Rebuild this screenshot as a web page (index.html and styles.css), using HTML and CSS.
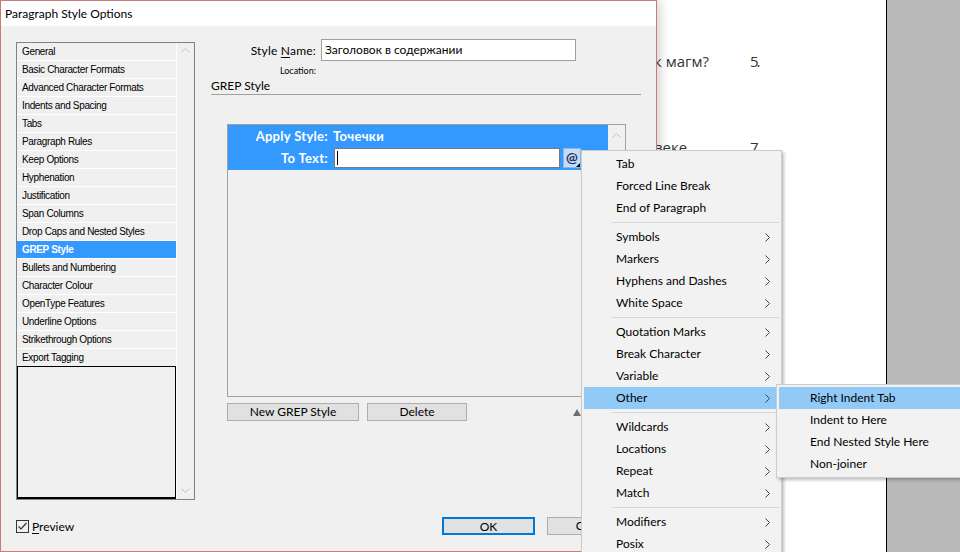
FILE: index.html
```html
<!DOCTYPE html>
<html>
<head>
<meta charset="utf-8">
<title>Paragraph Style Options</title>
<link rel="stylesheet" href="styles.css">
</head>
<body>
<div class="screen">
  <div class="dialog">
    <div class="titlebar">Paragraph Style Options</div>
    <div class="dlg-body">
      <div class="main">
        <div class="catlist">
          <div class="items">
            <div class="item">General</div>
            <div class="item">Basic Character Formats</div>
            <div class="item">Advanced Character Formats</div>
            <div class="item">Indents and Spacing</div>
            <div class="item">Tabs</div>
            <div class="item">Paragraph Rules</div>
            <div class="item">Keep Options</div>
            <div class="item">Hyphenation</div>
            <div class="item">Justification</div>
            <div class="item">Span Columns</div>
            <div class="item">Drop Caps and Nested Styles</div>
            <div class="item sel">GREP Style</div>
            <div class="item">Bullets and Numbering</div>
            <div class="item">Character Colour</div>
            <div class="item">OpenType Features</div>
            <div class="item">Underline Options</div>
            <div class="item">Strikethrough Options</div>
            <div class="item">Export Tagging</div>
            <div class="blackbox"></div>
          </div>
          <div class="vscroll">
            <svg class="chev" width="9" height="5" viewBox="0 0 9 5"><path d="M0.5 4.5 L4.5 0.5 L8.5 4.5" fill="none" stroke="#c2c2c2"/></svg>
            <svg class="chev" width="9" height="5" viewBox="0 0 9 5"><path d="M0.5 0.5 L4.5 4.5 L8.5 0.5" fill="none" stroke="#c2c2c2"/></svg>
          </div>
        </div>
        <div class="panel">
          <div class="namerow">
            <span class="lbl">Style <u>N</u>ame:</span>
            <div class="input">Заголовок в содержании</div>
          </div>
          <div class="locrow">Location:</div>
          <div class="sechead">GREP Style</div>
          <div class="grepbox">
            <div class="grepitems">
              <div class="greprow">
                <div class="gr-line1"><span class="gr-label">Apply Style:</span><span>Точечки</span></div>
                <div class="gr-line2">
                  <span class="gr-label">To Text:</span>
                  <div class="gr-input"><span class="caret"></span></div>
                  <div class="atbtn">@<span class="attri"></span></div>
                </div>
              </div>
            </div>
            <div class="gscroll">
              <svg class="chev" width="9" height="5" viewBox="0 0 9 5"><path d="M0.5 4.5 L4.5 0.5 L8.5 4.5" fill="none" stroke="#c2c2c2"/></svg>
            </div>
          </div>
          <div class="btnrow">
            <button class="btn btn-new">New GREP Style</button>
            <button class="btn btn-del">Delete</button>
            <span class="grip"></span>
          </div>
        </div>
      </div>
      <div class="footer">
        <div class="preview">
          <span class="cb"><svg width="11" height="11" viewBox="0 0 11 11"><path d="M1.5 5.5 L4 8 L9.5 2" fill="none" stroke="#333" stroke-width="1.2"/></svg></span>
          <span class="pv-text"><u>P</u>review</span>
        </div>
        <div class="okcancel">
          <button class="btn btn-ok">OK</button>
          <button class="btn btn-cancel">Cancel</button>
        </div>
      </div>
    </div>
  </div>
  <div class="page">
    <div class="pline first"><span class="pl-text">к магм?</span><span class="pnum">5.</span></div>
    <div class="pline second"><span class="pl-text">веке</span><span class="pnum">7</span></div>
  </div>
  <div class="pasteboard"></div>
</div>

<div class="menu">
  <div class="mi"><span>Tab</span></div>
  <div class="mi"><span>Forced Line Break</span></div>
  <div class="mi"><span>End of Paragraph</span></div>
  <div class="msep"></div>
  <div class="mi"><span>Symbols</span><svg width="5" height="9" viewBox="0 0 5 9"><path d="M0.5 0.5 L4.5 4.5 L0.5 8.5" fill="none" stroke="#444"/></svg></div>
  <div class="mi"><span>Markers</span><svg width="5" height="9" viewBox="0 0 5 9"><path d="M0.5 0.5 L4.5 4.5 L0.5 8.5" fill="none" stroke="#444"/></svg></div>
  <div class="mi"><span>Hyphens and Dashes</span><svg width="5" height="9" viewBox="0 0 5 9"><path d="M0.5 0.5 L4.5 4.5 L0.5 8.5" fill="none" stroke="#444"/></svg></div>
  <div class="mi"><span>White Space</span><svg width="5" height="9" viewBox="0 0 5 9"><path d="M0.5 0.5 L4.5 4.5 L0.5 8.5" fill="none" stroke="#444"/></svg></div>
  <div class="msep"></div>
  <div class="mi"><span>Quotation Marks</span><svg width="5" height="9" viewBox="0 0 5 9"><path d="M0.5 0.5 L4.5 4.5 L0.5 8.5" fill="none" stroke="#444"/></svg></div>
  <div class="mi"><span>Break Character</span><svg width="5" height="9" viewBox="0 0 5 9"><path d="M0.5 0.5 L4.5 4.5 L0.5 8.5" fill="none" stroke="#444"/></svg></div>
  <div class="mi"><span>Variable</span><svg width="5" height="9" viewBox="0 0 5 9"><path d="M0.5 0.5 L4.5 4.5 L0.5 8.5" fill="none" stroke="#444"/></svg></div>
  <div class="mi hl"><span>Other</span><svg width="5" height="9" viewBox="0 0 5 9"><path d="M0.5 0.5 L4.5 4.5 L0.5 8.5" fill="none" stroke="#444"/></svg></div>
  <div class="msep"></div>
  <div class="mi"><span>Wildcards</span><svg width="5" height="9" viewBox="0 0 5 9"><path d="M0.5 0.5 L4.5 4.5 L0.5 8.5" fill="none" stroke="#444"/></svg></div>
  <div class="mi"><span>Locations</span><svg width="5" height="9" viewBox="0 0 5 9"><path d="M0.5 0.5 L4.5 4.5 L0.5 8.5" fill="none" stroke="#444"/></svg></div>
  <div class="mi"><span>Repeat</span><svg width="5" height="9" viewBox="0 0 5 9"><path d="M0.5 0.5 L4.5 4.5 L0.5 8.5" fill="none" stroke="#444"/></svg></div>
  <div class="mi"><span>Match</span><svg width="5" height="9" viewBox="0 0 5 9"><path d="M0.5 0.5 L4.5 4.5 L0.5 8.5" fill="none" stroke="#444"/></svg></div>
  <div class="msep"></div>
  <div class="mi"><span>Modifiers</span><svg width="5" height="9" viewBox="0 0 5 9"><path d="M0.5 0.5 L4.5 4.5 L0.5 8.5" fill="none" stroke="#444"/></svg></div>
  <div class="mi"><span>Posix</span><svg width="5" height="9" viewBox="0 0 5 9"><path d="M0.5 0.5 L4.5 4.5 L0.5 8.5" fill="none" stroke="#444"/></svg></div>
</div>

<div class="submenu">
  <div class="mi hl"><span>Right Indent Tab</span></div>
  <div class="mi"><span>Indent to Here</span></div>
  <div class="mi"><span>End Nested Style Here</span></div>
  <div class="mi"><span>Non-joiner</span></div>
</div>
</body>
</html>
```

FILE: styles.css
```css
* { box-sizing: border-box; }
html, body { margin: 0; padding: 0; }
body {
  width: 960px;
  height: 552px;
  overflow: hidden;
  position: relative;
  font-family: Lato, "Noto Sans", sans-serif;
  font-size: 12px;
  color: #000;
  background: #b9b9b9;
}
u { text-decoration: underline; text-underline-offset: 2px; }

.screen { display: flex; width: 960px; height: 552px; }

.dialog {
  width: 657px;
  height: 552px;
  flex: none;
  border: 1px solid #c97b7b;
  background: #f0f0f0;
  display: flex;
  flex-direction: column;
  position: relative;
  z-index: 2;
  box-shadow: 3px 0 10px rgba(0, 0, 0, 0.18);
}
.titlebar {
  height: 25px;
  background: #fff;
  padding-left: 4px;
  line-height: 25px;
  font-size: 12px;
}
.dlg-body {
  flex: 1;
  padding: 16px 0 0 15px;
  display: flex;
  flex-direction: column;
}
.main { display: flex; align-items: flex-start; }

/* category list */
.catlist {
  width: 179px;
  height: 458px;
  flex: none;
  border: 1px solid #828282;
  display: flex;
}
.items {
  width: 160px;
  display: flex;
  flex-direction: column;
  border-right: 1px solid #fff;
}
.item {
  height: 18px;
  flex: none;
  line-height: 17px;
  border-bottom: 1px solid #fff;
  padding-left: 5px;
  font-family: "Liberation Sans", Arial, sans-serif;
  font-size: 10px;
  letter-spacing: -0.35px;
  white-space: nowrap;
}
.item.sel { background: #3399ff; color: #fff; font-weight: bold; }
.blackbox {
  flex: 1;
  margin-top: -1px;
  border: 1px solid #000;
  border-bottom-width: 2px;
}
.vscroll {
  flex: 1;
  display: flex;
  flex-direction: column;
  justify-content: space-between;
  align-items: center;
  padding: 5px 0 6px;
}
.chev { display: block; }

/* right panel */
.panel {
  margin-left: 16px;
  margin-top: -3px;
  width: 430px;
  display: flex;
  flex-direction: column;
}
.namerow { display: flex; align-items: center; height: 22px; }
.namerow .lbl { width: 105px; text-align: right; letter-spacing: 0.2px; }
.input {
  margin-left: 5px;
  width: 255px;
  height: 22px;
  background: #fff;
  border: 1px solid #a0a0a0;
  padding-left: 3px;
  line-height: 20px;
}
.locrow {
  margin-top: 3px;
  height: 14px;
  width: 105px;
  text-align: right;
  font-size: 9px;
  line-height: 14px;
}
.sechead {
  height: 17px;
  line-height: 16px;
  border-bottom: 1px solid #a0a0a0;
}
.grepbox {
  margin: 29px 0 0 16px;
  width: 399px;
  height: 273px;
  border: 1px solid #a0a0a0;
  display: flex;
}
.grepitems { width: 380px; }
.greprow {
  background: #3399ff;
  color: #fff;
  font-weight: bold;
  font-size: 13px;
  letter-spacing: 0.3px;
}
.gr-line1 { display: flex; height: 21px; align-items: center; }
.gr-line2 { display: flex; height: 24px; align-items: center; }
.gr-label { width: 100px; text-align: right; margin-right: 5px; }
.gr-input {
  width: 226px;
  height: 20px;
  margin-left: 1px;
  background: #fff;
  border: 1px solid #7a7a7a;
  padding: 2px 0 0 2px;
}
.caret { display: block; width: 1px; height: 14px; background: #000; }
.atbtn {
  position: relative;
  margin-left: 3px;
  width: 18px;
  height: 20px;
  background: #c4ddf4;
  border: 1px solid #8db8e2;
  color: #1b2d6b;
  font-weight: bold;
  font-size: 14px;
  letter-spacing: 0;
  line-height: 17px;
  text-align: center;
}
.attri {
  position: absolute;
  right: 0;
  bottom: 0;
  width: 0;
  height: 0;
  border-left: 4px solid transparent;
  border-bottom: 4px solid #000;
}
.gscroll {
  flex: 1;
  display: flex;
  justify-content: center;
  padding-top: 8px;
}
.btnrow {
  display: flex;
  align-items: center;
  margin: 6px 0 0 16px;
  height: 18px;
}
.btn {
  height: 18px;
  background: #e1e1e1;
  border: 1px solid #adadad;
  font-family: Lato, "Noto Sans", sans-serif;
  font-size: 12px;
  color: #000;
  padding: 0;
  line-height: 16px;
  border-radius: 0;
}
.btn-new { width: 132px; }
.btn-del { width: 100px; margin-left: 8px; }
.grip {
  margin-left: 106px;
  width: 0;
  height: 0;
  border-left: 4px solid transparent;
  border-right: 4px solid transparent;
  border-bottom: 7px solid #6e6e6e;
}

/* footer */
.footer {
  display: flex;
  align-items: center;
  margin-top: 17px;
  height: 18px;
  padding-right: 16px;
}
.preview { display: flex; align-items: center; }
.cb {
  width: 13px;
  height: 13px;
  border: 1px solid #333;
  display: flex;
  align-items: center;
  justify-content: center;
}
.pv-text { margin-left: 3px; }
.okcancel { margin-left: auto; display: flex; gap: 12px; }
.btn-ok { width: 93px; border: 2px solid #0078d7; }
.btn-cancel { width: 93px; }

/* document page behind */
.page {
  width: 230px;
  flex: none;
  background: #fff;
  border-right: 1px solid #000;
  overflow: hidden;
  padding-top: 50px;
}
.pline {
  display: flex;
  margin-left: -3px;
  font-family: "Open Sans", sans-serif;
  font-size: 15px;
  line-height: 22px;
  color: #333;
  white-space: nowrap;
}
.pline.second { margin-top: 64px; }
.pl-text { width: 96px; }
.pnum { letter-spacing: -2px; }
.pasteboard { flex: 1; background: #b9b9b9; }

/* context menus */
.menu, .submenu {
  position: absolute;
  background: #f2f2f2;
  border: 1px solid #cccccc;
  padding: 2px;
  box-shadow: 2px 2px 3px rgba(0, 0, 0, 0.25);
  font-family: Lato, "Noto Sans", sans-serif;
  font-size: 12px;
}
.menu { left: 581px; top: 150px; width: 201px; z-index: 10; }
.submenu { left: 776px; top: 384px; width: 200px; z-index: 11; }
.mi {
  height: 22px;
  line-height: 22px;
  padding: 0 9px 0 32px;
  display: flex;
  justify-content: space-between;
  align-items: center;
  white-space: nowrap;
}
.submenu .mi { padding-left: 31px; }
.mi.hl { background: #91c9f7; }
.msep { height: 7px; position: relative; }
.msep::after {
  content: "";
  position: absolute;
  left: 28px;
  right: 0;
  top: 3px;
  height: 1px;
  background: #d7d7d7;
}
```
